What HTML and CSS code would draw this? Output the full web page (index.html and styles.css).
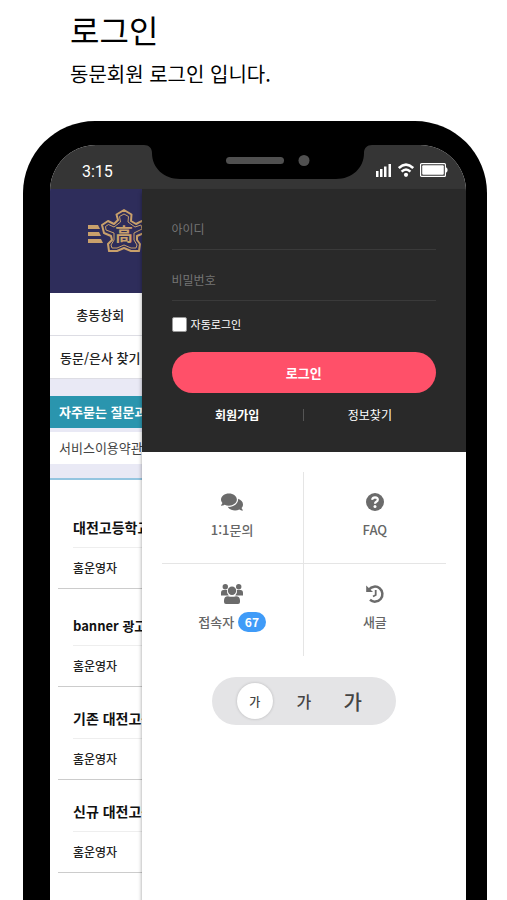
FILE: index.html
```html
<!DOCTYPE html>
<html lang="ko">
<head>
    <meta charset="UTF-8">
    <meta name="viewport" content="width=device-width, initial-scale=1.0">
    <title>로그인</title>
    <link rel="stylesheet" href="styles.css">
</head>
<body>

    <header class="intro">
        <h1>로그인</h1>
        <p>동문회원 로그인 입니다.</p>
    </header>

    <div class="phone">
        <div class="screen">

            <!-- 상태바 -->
            <div class="status-bar">
                <span class="time">3:15</span>
                <svg class="notch" width="228" height="35" viewBox="0 0 228 35" aria-hidden="true">
                    <path d="M0 0H228C223 0 220 3 220 8C220 23 208 34 192 34H36C20 34 8 23 8 8C8 3 5 0 0 0Z" fill="#000"/>
                    <rect x="82" y="12" width="58" height="7" rx="3.5" fill="#505050"/>
                    <circle cx="160" cy="15.500" r="5.500" fill="#505050"/>
                </svg>
                <div class="status-icons">
                    <svg width="16" height="14" viewBox="0 0 16 14" fill="#fff" aria-hidden="true">
                        <rect x="0" y="8" width="2.500" height="6"/>
                        <rect x="4" y="6" width="2.500" height="8"/>
                        <rect x="8" y="3.500" width="2.500" height="10.500"/>
                        <rect x="12.500" y="1" width="2.500" height="13"/>
                    </svg>
                    <svg width="16" height="14" viewBox="0 0 16 14" fill="none" stroke="#fff" stroke-width="2.600" aria-hidden="true">
                        <path d="M0.800 5Q8 -1.800 15.200 5"/>
                        <path d="M3.600 8.600Q8 4.400 12.400 8.600"/>
                        <circle cx="8" cy="11.800" r="2.100" fill="#fff" stroke="none"/>
                    </svg>
                    <svg width="28" height="14" viewBox="0 0 28 14" aria-hidden="true">
                        <rect x="0.600" y="0.600" width="24.800" height="12.800" rx="1" fill="none" stroke="#fff" stroke-width="1.200"/>
                        <rect x="2.200" y="2.200" width="21.600" height="9.600" rx="1" fill="#fff"/>
                        <path d="M25.500 4.500H26.500L27.500 6V8L26.500 9.500H25.500Z" fill="#fff"/>
                    </svg>
                </div>
            </div>

            <div class="view">

                <!-- 메뉴 뒤에 보이는 홈페이지 -->
                <main class="site">
                    <div class="banner">
                        <svg width="60" height="46" viewBox="0 0 60 46" aria-hidden="true">
                            <g fill="#c9a06b">
                                <path d="M1 18H11L13 22H1Z"/>
                                <path d="M1 25H12L14 29H1Z"/>
                                <path d="M1 32H14L16 36H1Z"/>
                            </g>
                            <g fill="none" stroke="#c9a06b" stroke-linejoin="round">
                                <path stroke-width="2" d="M37 3L44.500 7.500L44 14L49 17L55 14L59 20L57 26L50 29L50 33L53 37L52 44H44L37 41L30 44H22L21 37L25 33L24 29L17 26L15 18L21 14L27 17L31 13L29.500 7.500Z"/>
                                <path stroke-width="1" d="M37 7L41.500 9.500L41 15L48 20L54 18L55 22L47 26V33L50 38L49 41H44L37 38L30 41H25L24 38L27 33V26L19 23L18.500 19.500L21.500 17.500L27 20L33.500 15L32.500 9.500Z"/>
                            </g>
                            <text class="emblem" x="37" y="34" text-anchor="middle">高</text>
                        </svg>
                    </div>
                    <nav class="site-nav">
                        <a href="#">총동창회</a>
                        <a href="#">동문/은사 찾기</a>
                    </nav>
                    <nav class="site-tabs">
                        <a class="active" href="#">자주묻는 질문과</a>
                        <a href="#">서비스이용약관</a>
                    </nav>
                    <div class="posts">
                        <article class="post">
                            <h2>대전고등학교</h2>
                            <p>홈운영자</p>
                        </article>
                        <article class="post post-banner">
                            <h2>banner 광고</h2>
                            <p>홈운영자</p>
                        </article>
                        <article class="post">
                            <h2>기존 대전고등</h2>
                            <p>홈운영자</p>
                        </article>
                        <article class="post">
                            <h2>신규 대전고등</h2>
                            <p>홈운영자</p>
                        </article>
                    </div>
                </main>

                <!-- 사이드 메뉴 -->
                <aside class="drawer">
                    <form class="login">
                        <input class="field" type="text" placeholder="아이디" aria-label="아이디">
                        <input class="field" type="password" placeholder="비밀번호" aria-label="비밀번호">
                        <div class="auto">
                            <input type="checkbox" id="autoLogin">
                            <label for="autoLogin">자동로그인</label>
                        </div>
                        <button class="login-button" type="button">로그인</button>
                        <div class="login-links">
                            <a class="join" href="#">회원가입</a>
                            <a href="#">정보찾기</a>
                        </div>
                    </form>

                    <nav class="menu">
                        <a href="#">
                            <svg width="22" height="20" viewBox="0 0 576 512" fill="#6b6b6b" aria-hidden="true">
                                <path d="M416 192c0-88.400-93.100-160-208-160S0 103.600 0 192c0 34.300 14.100 65.900 38 92-13.400 30.200-35.500 54.200-35.800 54.500-2.200 2.300-2.800 5.700-1.500 8.700S4.800 352 8 352c36.600 0 66.900-12.300 88.700-25 32.200 15.700 70.300 25 111.300 25 114.900 0 208-71.600 208-160zm122 220c23.900-26 38-57.700 38-92 0-66.900-53.500-124.200-129.300-148.100.9 6.600 1.300 13.300 1.300 20.100 0 105.900-107.700 192-240 192-10.800 0-21.300-.8-31.700-1.900C207.800 439.600 281.800 480 368 480c41 0 79.100-9.200 111.300-25 21.800 12.700 52.100 25 88.700 25 3.200 0 6.100-1.900 7.300-4.800 1.300-2.900.7-6.300-1.500-8.700-.3-.3-22.400-24.200-35.800-54.500z"/>
                            </svg>
                            <span>1:1문의</span>
                        </a>
                        <a href="#">
                            <svg width="20" height="20" viewBox="0 0 20 20" aria-hidden="true">
                                <circle cx="10" cy="10" r="9" fill="#6b6b6b"/>
                                <path d="M7 7.800Q7.600 5.300 10 5.300Q12.800 5.400 12.800 7.700Q12.800 9 11.300 9.800Q10 10.500 10 11.800" fill="none" stroke="#fff" stroke-width="2.200"/>
                                <circle cx="10" cy="14.500" r="1.500" fill="#fff"/>
                            </svg>
                            <span>FAQ</span>
                        </a>
                        <a href="#">
                            <svg width="22" height="20" viewBox="0 0 22 20" fill="#6b6b6b" aria-hidden="true">
                                <circle cx="4.300" cy="2.700" r="2.700"/>
                                <circle cx="17.700" cy="2.700" r="2.700"/>
                                <circle cx="11" cy="6.800" r="4.200"/>
                                <path d="M0 11.500V9Q0 6 2.500 6H6Q5.500 9.500 7.800 11.500Z"/>
                                <path d="M22 11.500V9Q22 6 19.500 6H16Q16.500 9.500 14.200 11.500Z"/>
                                <path d="M3 18V16.500Q3 12.200 7 12.200Q11 13.500 15 12.200Q19 12.200 19 16.500V18Q19 20 17 20H5Q3 20 3 18Z"/>
                            </svg>
                            <span>접속자 <b class="badge">67</b></span>
                        </a>
                        <a href="#">
                            <svg width="20" height="20" viewBox="0 0 20 20" fill="none" stroke="#6b6b6b" aria-hidden="true">
                                <path stroke-width="2.500" d="M4 5.500A7.500 7.500 0 1 1 5 15.800"/>
                                <path d="M1.200 1.500V8H8Z" fill="#6b6b6b" stroke="none"/>
                                <path stroke-width="1.800" d="M10.700 6V11L8 12.500"/>
                            </svg>
                            <span>새글</span>
                        </a>
                    </nav>

                    <!-- 글자 크기 -->
                    <div class="font-size">
                        <button class="small on" type="button">가</button>
                        <button class="medium" type="button">가</button>
                        <button class="large" type="button">가</button>
                    </div>
                </aside>

            </div>
        </div>
    </div>

</body>
</html>
```

FILE: styles.css
```css
* {
    box-sizing: border-box;
}
body {
    display: flex;
    flex-direction: column;
    min-height: 100vh;
    margin: 0;
    background: #fff;
    color: #222;
    font-family: "Noto Sans CJK KR", "Noto Sans", sans-serif;
    font-size: 13px;
}
h1, h2, p {
    margin: 0;
}
a {
    color: inherit;
    text-decoration: none;
}
button {
    padding: 0;
    border: none;
    font-family: inherit;
    cursor: pointer;
}
svg {
    display: block;
}

.intro {
    padding: 5px 20px 31px 70px;
    color: #000;
}
.intro h1 {
    margin-bottom: 4px;
    font-size: 32px;
    font-weight: 400;
    line-height: 48px;
}
.intro p {
    font-size: 20px;
    line-height: 33px;
}

/* phone */
.phone {
    flex: 1;
    display: flex;
    margin: 0 20px 0 23px;
    padding: 24px 21px 0 27px;
    border-radius: 72px 72px 0 0;
    background: #000;
}
.screen {
    flex: 1;
    display: flex;
    flex-direction: column;
    min-width: 0;
    border-radius: 46px 46px 0 0;
    background: #fff;
    overflow: hidden;
}
.status-bar {
    position: relative;
    display: flex;
    justify-content: space-between;
    height: 44px;
    padding: 14px 18px 0 32px;
    background: #353535;
}
.time {
    color: #fff;
    font-family: Roboto, sans-serif;
    font-size: 16px;
    line-height: 25px;
}
.notch {
    position: absolute;
    top: 0;
    left: 50%;
    transform: translateX(-50%);
}
.status-icons {
    display: flex;
    gap: 6px;
    padding-top: 4px;
}
.view {
    flex: 1;
    display: flex;
}

/* page behind the menu */
.site {
    width: 22%;
    overflow: hidden;
    white-space: nowrap;
}
.banner {
    height: 104px;
    padding: 18px 0 0 37px;
    background: #2e2d5b;
}
.emblem {
    fill: #c9a06b;
    font-size: 18px;
    font-weight: 700;
}
.site-nav a {
    display: block;
    height: 43px;
    padding-left: 9px;
    border-bottom: 1px solid #dddde4;
    color: #222;
    font-size: 13px;
    font-weight: 500;
    line-height: 43px;
    text-align: center;
}
.site-tabs {
    padding: 17px 0 14px;
    border-bottom: 2px solid #94c5e0;
    background: #e9e9f5;
}
.site-tabs a {
    display: block;
    height: 32px;
    padding-left: 9px;
    background: #fff;
    color: #444;
    font-size: 13px;
    line-height: 32px;
}
.site-tabs .active {
    margin-bottom: 4px;
    background: #2a95ae;
    color: #fff;
    font-weight: 700;
}
.posts {
    display: flex;
    flex-direction: column;
    gap: 12px;
    padding: 28px 0 0 8px;
}
.post {
    padding-left: 15px;
    border-bottom: 1px solid #ccc;
}
.post-banner {
    margin-top: 5px;
}
.post h2 {
    border-bottom: 1px solid #eee;
    color: #111;
    font-size: 14px;
    font-weight: 700;
    line-height: 39px;
}
.post-banner h2 {
    font-size: 13px;
}
.post p {
    font-size: 12px;
    font-weight: 500;
    line-height: 40px;
}

/* drawer */
.drawer {
    flex: 1;
    display: flex;
    flex-direction: column;
    align-items: center;
    position: relative;
    background: #fff;
    box-shadow: 0 4px 4px rgba(0, 0, 0, 0.4);
}
.login {
    align-self: stretch;
    height: 263px;
    padding: 20px 30px 0 30px;
    background: #292929;
    color: #fff;
}
.field {
    display: block;
    width: 100%;
    height: 41px;
    margin-bottom: 10px;
    padding: 0 0 2px;
    border: none;
    border-bottom: 1px solid #3a3a3a;
    background: none;
    color: #fff;
    font-family: inherit;
    font-size: 12px;
}
.field::placeholder {
    color: #757575;
}
.auto {
    display: flex;
    align-items: center;
    gap: 4px;
    height: 26px;
    font-size: 11px;
}
.auto input {
    appearance: none;
    width: 15px;
    height: 15px;
    margin: 0;
    border: 1px solid #999;
    border-radius: 2px;
    background: #fff;
}
.auto input:checked {
    background: #ff5069;
}
.login-button {
    width: 100%;
    height: 41px;
    margin-top: 15px;
    border-radius: 21px;
    background: #ff5069;
    color: #fff;
    font-size: 13px;
    font-weight: 700;
}
.login-links {
    display: grid;
    grid-template-columns: 1fr 1fr;
    padding-top: 16px;
    font-size: 12px;
    line-height: 12px;
    text-align: center;
}
.login-links .join {
    border-right: 1px solid #555;
    font-weight: 700;
}
.menu {
    align-self: stretch;
    display: grid;
    grid-template-columns: 1fr 1fr;
    margin: 20px 20px 0;
}
.menu a {
    display: flex;
    flex-direction: column;
    align-items: center;
    gap: 8px;
    height: 92px;
    padding-top: 20px;
    color: #666;
    font-size: 13px;
    font-weight: 500;
    line-height: 20px;
}
.menu a:nth-child(odd) {
    border-right: 1px solid #e5e5e5;
}
.menu a:nth-child(-n+2) {
    border-bottom: 1px solid #e5e5e5;
}
.badge {
    display: inline-block;
    padding: 0 7px;
    border-radius: 10px;
    background: #3f9bf8;
    color: #fff;
    font-size: 12px;
    font-weight: 700;
}
.font-size {
    display: flex;
    align-items: center;
    gap: 13px;
    height: 48px;
    margin-top: 21px;
    padding: 0 25px;
    border-radius: 24px;
    background: #e4e4e6;
}
.font-size button {
    width: 36px;
    height: 36px;
    border-radius: 50%;
    background: none;
    color: #444;
    font-weight: 500;
}
.font-size .on {
    background: #fff;
    box-shadow: 0 0 3px rgba(0, 0, 0, 0.2);
}
.font-size .small {
    font-size: 12px;
}
.font-size .medium {
    font-size: 16px;
}
.font-size .large {
    font-size: 20px;
}
```
